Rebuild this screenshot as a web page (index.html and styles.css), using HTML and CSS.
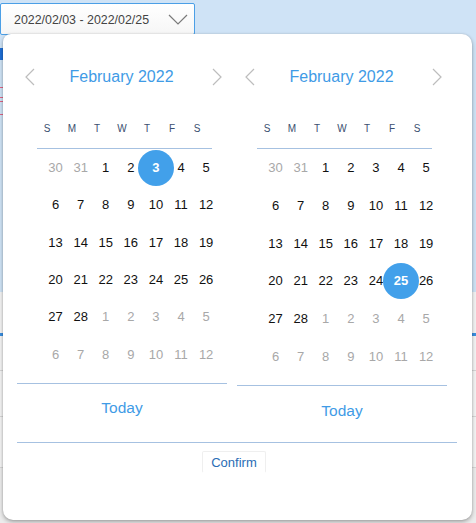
FILE: index.html
```html
<!DOCTYPE html>
<html>
<head>
<meta charset="utf-8">
<link rel="stylesheet" href="styles.css">
</head>
<body>
<div class="page">
  <div class="hero">
    <div class="picker-input">
      <span class="picker-value">2022/02/03 - 2022/02/25</span>
      <svg class="chevron" width="20" height="11" viewBox="0 0 20 11"><polyline points="1,1 10,10 19,1" fill="none" stroke="#7a7a7a" stroke-width="1.2"/></svg>
    </div>
    <div class="accent"></div>
    <div class="pink p1"></div>
    <div class="pink p2"></div>
    <div class="pink p3"></div>
    <div class="pink p4"></div>
  </div>
  <div class="lower">
    <div class="bar"></div>
    <div class="row r1"></div>
    <div class="row r2"></div>
    <div class="row r3"></div>
  </div>

  <div class="popup">
    <div class="calendars">
      <div class="cal">
        <div class="cal-head">
          <svg class="arrow" width="10" height="18" viewBox="0 0 10 18"><polyline points="9,1 1,9 9,17" fill="none" stroke="#bdbdbd" stroke-width="1.2"/></svg>
          <span class="title">February 2022</span>
          <svg class="arrow" width="10" height="18" viewBox="0 0 10 18"><polyline points="1,1 9,9 1,17" fill="none" stroke="#bdbdbd" stroke-width="1.2"/></svg>
        </div>
        <div class="weekdays"><span>S</span><span>M</span><span>T</span><span>W</span><span>T</span><span>F</span><span>S</span></div>
        <div class="rule"></div>
        <div class="days">
          <span class="o">30</span><span class="o">31</span><span>1</span><span>2</span><span><b class="sel">3</b></span><span>4</span><span>5</span>
          <span>6</span><span>7</span><span>8</span><span>9</span><span>10</span><span>11</span><span>12</span>
          <span>13</span><span>14</span><span>15</span><span>16</span><span>17</span><span>18</span><span>19</span>
          <span>20</span><span>21</span><span>22</span><span>23</span><span>24</span><span>25</span><span>26</span>
          <span>27</span><span>28</span><span class="o">1</span><span class="o">2</span><span class="o">3</span><span class="o">4</span><span class="o">5</span>
          <span class="o">6</span><span class="o">7</span><span class="o">8</span><span class="o">9</span><span class="o">10</span><span class="o">11</span><span class="o">12</span>
        </div>
        <div class="cal-foot">Today</div>
      </div>
      <div class="cal cal-right">
        <div class="cal-head">
          <svg class="arrow" width="10" height="18" viewBox="0 0 10 18"><polyline points="9,1 1,9 9,17" fill="none" stroke="#bdbdbd" stroke-width="1.2"/></svg>
          <span class="title">February 2022</span>
          <svg class="arrow" width="10" height="18" viewBox="0 0 10 18"><polyline points="1,1 9,9 1,17" fill="none" stroke="#bdbdbd" stroke-width="1.2"/></svg>
        </div>
        <div class="weekdays"><span>S</span><span>M</span><span>T</span><span>W</span><span>T</span><span>F</span><span>S</span></div>
        <div class="rule"></div>
        <div class="days">
          <span class="o">30</span><span class="o">31</span><span>1</span><span>2</span><span>3</span><span>4</span><span>5</span>
          <span>6</span><span>7</span><span>8</span><span>9</span><span>10</span><span>11</span><span>12</span>
          <span>13</span><span>14</span><span>15</span><span>16</span><span>17</span><span>18</span><span>19</span>
          <span>20</span><span>21</span><span>22</span><span>23</span><span>24</span><span><b class="sel">25</b></span><span>26</span>
          <span>27</span><span>28</span><span class="o">1</span><span class="o">2</span><span class="o">3</span><span class="o">4</span><span class="o">5</span>
          <span class="o">6</span><span class="o">7</span><span class="o">8</span><span class="o">9</span><span class="o">10</span><span class="o">11</span><span class="o">12</span>
        </div>
        <div class="cal-foot">Today</div>
      </div>
    </div>
    <div class="popup-foot">
      <button class="confirm">Confirm</button>
    </div>
  </div>
</div>
</body>
</html>
```
FILE: styles.css
```css
* { box-sizing: border-box; }
html, body { margin: 0; padding: 0; }
body {
  width: 476px;
  height: 523px;
  overflow: hidden;
  font-family: "Liberation Sans", Arial, sans-serif;
  background: #f3f3f3;
}
.page {
  position: relative;
  width: 476px;
  height: 523px;
  overflow: hidden;
}
.hero {
  height: 292px;
  background: #cfe3f6;
  padding-top: 3px;
}
.picker-input {
  width: 195px;
  height: 32px;
  border: 1px solid #4b9fe6;
  border-radius: 2px;
  background: linear-gradient(#ffffff, #f6f6f6);
  display: flex;
  align-items: center;
  padding: 0 6px 0 13px;
  justify-content: space-between;
}
.picker-value {
  font-size: 12.4px;
  color: #444;
  margin-top: 1px;
}
.chevron { margin-top: 1px; }
.accent {
  margin-top: 13px;
  width: 3px;
  height: 12px;
  background: #1f6fd6;
}
.pink { width: 3px; height: 1px; background: #e06483; }
.p1 { margin-top: 27px; }
.p2 { margin-top: 9px; }
.p3 { margin-top: 3px; }
.p4 { margin-top: 12px; }
.lower {
  height: 231px;
  background: #ececec;
}
.bar {
  margin-top: 41px;
  height: 3px;
  background: #3b8fe0;
}
.row { border-bottom: 1px solid #d6d6d6; background: #f4f4f4; }
.r1 { height: 35px; }
.r2 { height: 46px; }
.r3 { height: 51px; }

.popup {
  position: absolute;
  left: 3px;
  top: 34px;
  width: 469px;
  height: 486px;
  background: #fff;
  border-radius: 8px 10px 10px 10px;
  box-shadow: 0 2px 4px rgba(0,0,0,0.3), 0 0 2px rgba(0,0,0,0.14);
  padding-left: 14px;
}
.calendars {
  display: flex;
  gap: 10px;
  height: 408px;
  align-items: flex-start;
}
.cal { width: 210px; }
.cal-head {
  display: flex;
  align-items: center;
  height: 26px;
  margin-top: 30px;
  padding: 0 5px 0 8px;
}
.arrow { flex: none; display: block; }
.title {
  flex: 1;
  text-align: center;
  font-size: 16px;
  color: #3f9be6;
  padding-right: 4px;
}
.weekdays {
  display: grid;
  grid-template-columns: repeat(7, 25px);
  margin: 28px 0 0 17.5px;
  height: 20px;
  align-items: center;
}
.weekdays span {
  text-align: center;
  font-size: 10px;
  color: #3a4f70;
}
.rule {
  margin: 10px 0 0 20px;
  width: 175px;
  height: 1px;
  background: #a6c1e1;
}
.days {
  display: grid;
  grid-template-columns: repeat(7, 25.1px);
  grid-auto-rows: 37.3px;
  margin-left: 26px;
}
.cal-right .days { grid-auto-rows: 37.7px; }
.days span {
  display: flex;
  align-items: center;
  justify-content: center;
  font-size: 13px;
  color: #111;
}
.days span.o { color: #a8a8a8; }
.sel {
  flex: none;
  width: 36px;
  height: 36px;
  border-radius: 50%;
  background: #42a0ea;
  color: #fff;
  font-weight: bold;
  display: flex;
  align-items: center;
  justify-content: center;
  font-size: 13px;
}
.cal-foot {
  margin-top: 10px;
  border-top: 1px solid #a6c1e1;
  height: 50px;
  display: flex;
  align-items: center;
  justify-content: center;
  font-size: 15.5px;
  color: #3f9be6;
}
.popup-foot {
  width: 440px;
  border-top: 1px solid #a6c1e1;
  display: flex;
  justify-content: center;
  padding-top: 8px;
}
.confirm {
  font-family: "Liberation Sans", Arial, sans-serif;
  font-size: 13px;
  color: #2a6db5;
  background: #fff;
  border: 1px solid #efefef;
  border-bottom-color: #fff;
  border-radius: 2px;
  height: 22px;
  padding: 0 8px;
  margin-right: 6px;
}
```
